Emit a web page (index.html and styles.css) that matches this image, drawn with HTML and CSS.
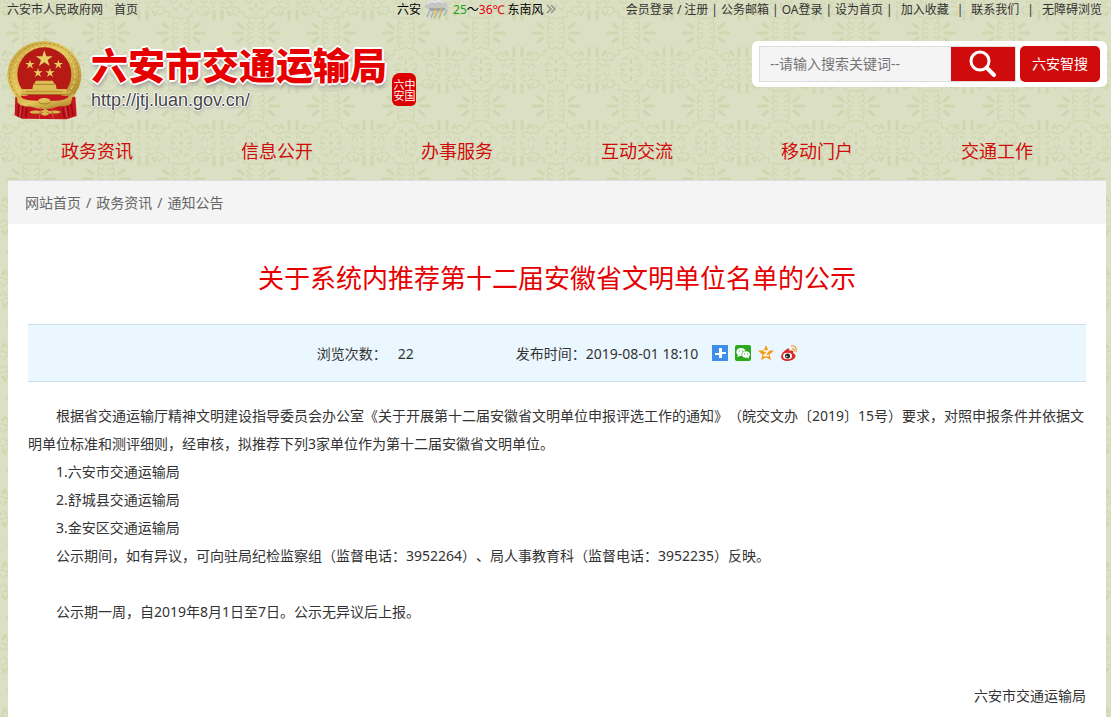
FILE: index.html
```
<!DOCTYPE html>
<html lang="zh-CN">
<head>
    <meta charset="UTF-8">
    <meta name="viewport" content="width=device-width, initial-scale=1.0">
    <title>关于系统内推荐第十二届安徽省文明单位名单的公示</title>
    <link rel="stylesheet" href="styles.css">
</head>
<body>
    <div class="topbar">
        <div class="top-left">
            <a href="#">六安市人民政府网</a>
            <a href="#">首页</a>
        </div>
        <div class="weather">
            <span>六安</span>
            <svg class="weather-icon" width="26" height="20" viewBox="0 0 26 20" aria-hidden="true">
                <path d="M2 5c0-4 5-5 7-4 3-3 9-2 10 1 5 0 6 6 2 7H5C1 9 0 6 2 5z" fill="#c3c6c3"/>
                <path d="M3 4c3-4 6-3 8-2 3-2 7-1 8 1" fill="none" stroke="#e4e6e3" stroke-width="2"/>
                <path d="M5 8h17l-2 3H6z" fill="#9da6ae"/>
                <path d="M6 10l-3 7M10 11l-3 7M14 11l-4 8M19 9l-4 9M23 9l-3 7" stroke="#9cb3ca" stroke-width="1.5"/>
                <path d="M12 8l-3 5h3l-2 5M18 7l-3 5h3l-3 6" fill="none" stroke="#eeb63c" stroke-width="1"/>
            </svg>
            <span><span class="low">25</span>～<span class="high">36℃</span></span>
            <span class="wind">东南风</span>
            <svg width="10" height="10" viewBox="0 0 10 10" aria-hidden="true">
                <path d="M1 1l4 4-4 4M5 1l4 4-4 4" fill="none" stroke="#8e9488" stroke-width="1.5"/>
            </svg>
        </div>
        <div class="top-right">
            <a href="#">会员登录</a><i>/</i><a href="#">注册</a><i>|</i><a href="#">公务邮箱</a><i>|</i><a href="#">OA登录</a><i>|</i><a href="#">设为首页</a><i>|</i><a class="wide" href="#">加入收藏</a><i>|</i><a class="wide" href="#">联系我们</a><i>|</i><a class="wide" href="#">无障碍浏览</a>
        </div>
    </div>

    <header class="header">
        <div class="logo">
            <svg class="emblem" width="80" height="86" viewBox="0 0 240 258" aria-hidden="true">
                <defs>
                    <linearGradient id="gold" x1="0" y1="0" x2="1" y2="1">
                        <stop offset="0" stop-color="#c69f35"/>
                        <stop offset=".45" stop-color="#e3c860"/>
                        <stop offset="1" stop-color="#a87c20"/>
                    </linearGradient>
                </defs>
                <path d="M34 176l-2 56 22 10 134 2 30-10-4-58z" fill="#c4161c"/>
                <ellipse cx="121" cy="111" rx="111" ry="102" fill="url(#gold)"/>
                <ellipse cx="121" cy="111" rx="104" ry="95" fill="none" stroke="#b08c30" stroke-width="3" stroke-dasharray="8 5"/>
                <ellipse cx="121" cy="111" rx="92" ry="86" fill="none" stroke="#f0da83" stroke-width="3" stroke-dasharray="10 7"/>
                <circle cx="121" cy="109" r="81" fill="#b51a14"/>
                <g fill="#e7ce66">
                    <path d="M121 37l6 18h19l-15 11 6 18-16-11-16 11 6-18-15-11h19z"/>
                    <path id="star" d="M78 65l3 10h11l-9 6 4 11-9-7-9 7 4-11-9-6h11z"/>
                    <use href="#star" x="85"/>
                    <use href="#star" x="24" y="25"/>
                    <use href="#star" x="60" y="25"/>
                </g>
                <path d="M96 128h50l6 10h-62zM88 139h67l3 14H85z" fill="#dbbd55"/>
                <path d="M54 153h134v16H52z" fill="#d9b94f"/>
                <path d="M52 169h138M90 139h63M66 161h110" stroke="#a17e2a" stroke-width="2"/>
                <path d="M50 173h144l-10 20H60z" fill="#c4161c"/>
                <path d="M36 165c24 28 50 20 65 24 5-12 34-12 40 0 20-3 44 3 68-25l-9 34c-22 13-41 3-57 6-8 8-36 8-44 0-19-2-35 7-57-6z" fill="url(#gold)"/>
                <path d="M76 222c16-8 30-2 36-3 8-7 17-7 22 0 8 0 20-5 38 3-14 8-27 2-37 6-8 7-18 6-24 0-12-3-22 4-35-6z" fill="#d8b84e"/>
                <path d="M84 227c17 0 26 1 34-5M160 227c-17 0-24 1-32-5M102 191c5 9 34 9 39 0" fill="none" stroke="#a37c23" stroke-width="3"/>
                <path d="M45 196l-3 40M57 203l-6 36M69 209l-4 32M177 209l4 32M190 205l5 32M202 198l5 35" stroke="#8d0d12" stroke-width="4"/>
                <path d="M52 200l-4 36M184 207l6 32M110 208l-4 34M143 208l5 34" stroke="#e2494d" stroke-width="3"/>
            </svg>
            <div class="logo-text">
                <div class="site-name">六安市交通运输局</div>
                <div class="site-url">http://jtj.luan.gov.cn/</div>
            </div>
            <div class="seal"><span>中国</span><span>六安</span></div>
        </div>
        <form class="search">
            <input type="text" aria-label="搜索关键词" placeholder="--请输入搜索关键词--">
            <button class="search-btn" type="button" aria-label="搜索">
                <svg width="28" height="28" viewBox="0 0 28 28" aria-hidden="true">
                    <circle cx="11" cy="11" r="9" fill="none" stroke="#fff" stroke-width="3"/>
                    <path d="M18 18l7 7" stroke="#fff" stroke-width="4" stroke-linecap="round"/>
                </svg>
            </button>
            <button class="smart-btn" type="button">六安智搜</button>
        </form>
    </header>

    <nav class="nav">
        <a href="#">政务资讯</a>
        <a href="#">信息公开</a>
        <a href="#">办事服务</a>
        <a href="#">互动交流</a>
        <a href="#">移动门户</a>
        <a href="#">交通工作</a>
    </nav>

    <main class="main">
        <div class="breadcrumb">
            <a href="#">网站首页</a><span>/</span><a href="#">政务资讯</a><span>/</span><a href="#">通知公告</a>
        </div>
        <article class="article">
            <h1>关于系统内推荐第十二届安徽省文明单位名单的公示</h1>
            <div class="info">
                <span class="views">浏览次数：<span class="count">22</span></span>
                <span>发布时间：2019-08-01 18:10</span>
                <span class="share">
                    <a href="#" aria-label="分享">
                        <svg width="16" height="16" viewBox="0 0 16 16"><path d="M0 0h16v16H0z" fill="#3f8fe8"/><path d="M7 3h3v4h4v3h-4v3H7v-3H3V7h4z" fill="#fff"/><path d="M7 7.500H3M10 9.500h4" stroke="#3f8fe8"/></svg>
                    </a>
                    <a href="#" aria-label="微信">
                        <svg width="16" height="16" viewBox="0 0 16 16"><rect width="16" height="16" rx="2" fill="#2ca81f"/><path d="M6 3c-5 0-6 5-3 7l-1 2 3-1c6 1 8-8 1-8z" fill="#fff"/><path d="M11 6c-5 0-6 6-1 7l2 0 2 1v-2c3-3 0-6-3-6z" fill="#fff" stroke="#2ca81f" stroke-width=".6"/><path d="M4 6h1M7 6h1M9 9h1M12 9h1" stroke="#2ca81f"/></svg>
                    </a>
                    <a href="#" aria-label="QQ空间">
                        <svg width="16" height="16" viewBox="0 0 16 16"><path d="M8 0l2.200 5.200 5.800.5-4.400 3.800 1.300 5.800L8 12.300l-4.900 3 1.300-5.800L0 5.700l5.800-.5z" fill="#f59a13"/><path d="M5.500 6h5L6 10.500h5" fill="none" stroke="#fff" stroke-width="1.300"/></svg>
                    </a>
                    <a href="#" aria-label="新浪微博">
                        <svg width="16" height="16" viewBox="0 0 16 16"><path d="M6 4c2-1 3 0 2 2 3-1 5 0 4 2 6 3 0 8-5 8-9 0-9-7-1-12z" fill="#db2a26"/><ellipse cx="6.500" cy="11" rx="4.500" ry="3.300" fill="#fff"/><circle cx="6.500" cy="11" r="2.500" fill="#222"/><circle cx="5.800" cy="11.500" r=".8" fill="#fff"/><path d="M10 1c4-1 6 2 5 6M11 4c2-.5 2.500.8 2 2.500" fill="none" stroke="#f2a12c" stroke-width="1.300"/></svg>
                    </a>
                </span>
            </div>
            <div class="content">
                <p>根据省交通运输厅精神文明建设指导委员会办公室《关于开展第十二届安徽省文明单位申报评选工作的通知》（皖交文办〔2019〕15号）要求，对照申报条件并依据文明单位标准和测评细则，经审核，拟推荐下列3家单位作为第十二届安徽省文明单位。</p>
                <p>1.六安市交通运输局</p>
                <p>2.舒城县交通运输局</p>
                <p>3.金安区交通运输局</p>
                <p>公示期间，如有异议，可向驻局纪检监察组（监督电话：3952264）、局人事教育科（监督电话：3952235）反映。</p>
                <p>&nbsp;</p>
                <p>公示期一周，自2019年8月1日至7日。公示无异议后上报。</p>
                <p>&nbsp;</p>
                <p>&nbsp;</p>
                <p class="sign">六安市交通运输局</p>
            </div>
        </article>
    </main>
</body>
</html>
```
FILE: styles.css
```
* {
    box-sizing: border-box;
}
body {
    margin: 0;
    font-family: "Noto Sans", "Noto Sans CJK SC", sans-serif;
    font-size: 14px;
    color: #333;
    background-color: #dbdfc3;
    /* damask tile */
    background-image: url("data:image/svg+xml,%3Csvg xmlns='http://www.w3.org/2000/svg' xmlns:xlink='http://www.w3.org/1999/xlink' width='75' height='73' viewBox='0 0 75 73'%3E%3Cdefs%3E%3Cg id='h'%3E%3Cpath d='M14 0h9M13-5l5-4M13 5l5 4' stroke-width='3' stroke-linecap='round'/%3E%3Cpath d='M3 0h5M3-3c5-5 8 1 4 1M3 3c5 5 8-1 4-1M2-8c4-5 9-1 5 2M2 8c4 5 9 1 5-2M0-14c5-4 9 0 7 4M0 14c5 4 9 0 7-4'/%3E%3C/g%3E%3Cg id='a'%3E%3Cuse xlink:href='%23h'/%3E%3Cuse xlink:href='%23h' transform='scale(-1 1)'/%3E%3C/g%3E%3Cg id='v'%3E%3Cpath d='M4-14v-8M10-15l2-3' stroke-width='3' stroke-linecap='round'/%3E%3Cpath d='M2-1h4M3-4c1-4 6-4 4 0M10-2c3-7 9-3 5 0M3-9c5-4 9-2 11 1M15-13c-4-4 3-7 5-2M13-10c6 1 9-1 8-5h5v-5h5'/%3E%3C/g%3E%3Cg id='c'%3E%3Cuse xlink:href='%23v'/%3E%3Cuse xlink:href='%23v' transform='scale(-1 1)'/%3E%3Cuse xlink:href='%23v' transform='scale(1 -1)'/%3E%3Cuse xlink:href='%23v' transform='scale(-1 -1)'/%3E%3C/g%3E%3Cg id='b'%3E%3Cpath d='M-2 0h4M0-2v4M0-11v5M0 6v5M-11 0h5M6 0h5' stroke-width='2'/%3E%3Cpath d='M-4-4c-5-6-9 1-4 2M4-4c5-6 9 1 4 2M-4 4c-5 6-9-1-4-2M4 4c5 6 9-1 4-2M-3-10c-1-4-6-3-4 0M3-10c1-4 6-3 4 0M-3 10c-1 4-6 3-4 0M3 10c1 4 6 3 4 0'/%3E%3Cpath d='M-17 0L0-18 17 0 0 18z' stroke-width='.5'/%3E%3C/g%3E%3C/defs%3E%3Cg fill='none' stroke='%23d0d6b0' stroke-width='1.200'%3E%3Cuse xlink:href='%23a'/%3E%3Cuse xlink:href='%23a' x='75'/%3E%3Cuse xlink:href='%23a' y='73'/%3E%3Cuse xlink:href='%23a' x='75' y='73'/%3E%3Cuse xlink:href='%23c' x='37' y='37'/%3E%3Cuse xlink:href='%23b' y='37'/%3E%3Cuse xlink:href='%23b' x='75' y='37'/%3E%3C/g%3E%3C/svg%3E");
    background-position: 31px 33px;
}
a {
    color: inherit;
    text-decoration: none;
}
.topbar {
    display: flex;
    height: 20px;
    line-height: 20px;
    padding: 0 9px 0 7px;
    font-size: 12px;
    white-space: nowrap;
}
.top-left {
    flex: 0 0 390px;
    display: flex;
    gap: 11px;
}
.weather {
    display: flex;
    gap: 3px;
    color: #000;
}
.weather svg {
    margin-top: 4px;
}
.weather .weather-icon {
    margin: 0;
}
.low {
    color: #1fa11f;
}
.high {
    color: #e60012;
}
.top-right {
    margin-left: auto;
}
.top-right i {
    font-style: normal;
    margin: 0 3px;
}
.top-right .wide {
    margin: 0 5px;
}
.top-right .wide:last-child {
    margin-right: 0;
}
.header {
    display: flex;
    justify-content: space-between;
    align-items: flex-start;
    height: 110px;
    padding: 18px 4px 0;
}
.logo {
    display: flex;
}
.logo-text {
    margin: 4px 0 0 7px;
}
.site-name {
    font-size: 37px;
    font-weight: 900;
    line-height: 48px;
    color: #e60000;
    text-shadow: -2px 0 #fff, 2px 0 #fff, 0 -2px #fff, 0 2px #fff, -1px -1px #fff, 1px 1px #fff, 1px 4px 4px #999;
}
.site-url {
    font-family: "Liberation Sans", sans-serif;
    font-size: 18px;
    line-height: 20px;
    color: #444;
    text-shadow: -1px 0 #fff, 1px 0 #fff, 0 -1px #fff, 0 1px #fff, 1px 2px 3px #aaa;
}
.seal {
    display: flex;
    flex-direction: row-reverse;
    justify-content: center;
    align-self: flex-start;
    width: 24px;
    margin: 35px 0 0 5px;
    padding: 6px 0 5px;
    border-radius: 8px 6px 5px 6px;
    background: #dc0000;
    color: #fff;
    font-size: 11px;
    line-height: 11px;
}
.seal span {
    writing-mode: vertical-rl;
}
.search {
    display: flex;
    padding: 5px 7px;
    margin-top: 3px;
    border-radius: 6px;
    background: #fff;
}
.search input {
    width: 192px;
    height: 36px;
    padding: 0 10px 2px;
    border: 1px solid #ddd;
    border-right: 0;
    background: #f4f4f4;
    font: inherit;
}
.search input::placeholder {
    color: #757575;
}
.search button {
    height: 36px;
    padding: 0 0 2px;
    border: 0;
    background: #cf0b0b;
    color: #fff;
    font: inherit;
    cursor: pointer;
}
.search .search-btn {
    display: flex;
    align-items: center;
    justify-content: center;
    width: 65px;
    padding: 0;
    border: 1px solid #ddd;
    border-left: 0;
}
.search .smart-btn {
    width: 80px;
    margin-left: 4px;
    border-radius: 5px;
}
.nav {
    display: grid;
    grid-template-columns: repeat(6, 1fr);
    padding: 0 24px 0 7px;
    height: 50px;
    line-height: 42px;
    font-size: 18px;
    text-align: center;
    color: #cf0b0b;
}
.main {
    margin: 0 5px 0 8px;
    background: #fff;
}
.breadcrumb {
    display: flex;
    gap: 5px;
    height: 44px;
    padding: 0 17px;
    border-top: 1px solid #ddd;
    background: #f4f4f4;
    line-height: 44px;
    color: #666;
}
.article {
    padding: 36px 20px 40px;
}
.article h1 {
    margin: 0 0 28px;
    font-size: 26px;
    font-weight: normal;
    line-height: 36px;
    text-align: center;
    color: #e60000;
}
.info {
    display: flex;
    justify-content: center;
    align-items: center;
    height: 58px;
    border: 1px solid #c5dfee;
    border-width: 1px 0;
    background: #ebf7ff;
}
.views {
    margin-right: 102px;
}
.count {
    margin-left: 11px;
}
.share {
    display: flex;
    gap: 7px;
    margin-left: 14px;
}
.share svg {
    display: block;
}
.content {
    margin-top: 20px;
    line-height: 28px;
    text-spacing-trim: space-all;
}
.content p {
    margin: 0;
    text-indent: 28px;
}
.content .sign {
    text-align: right;
}
```
